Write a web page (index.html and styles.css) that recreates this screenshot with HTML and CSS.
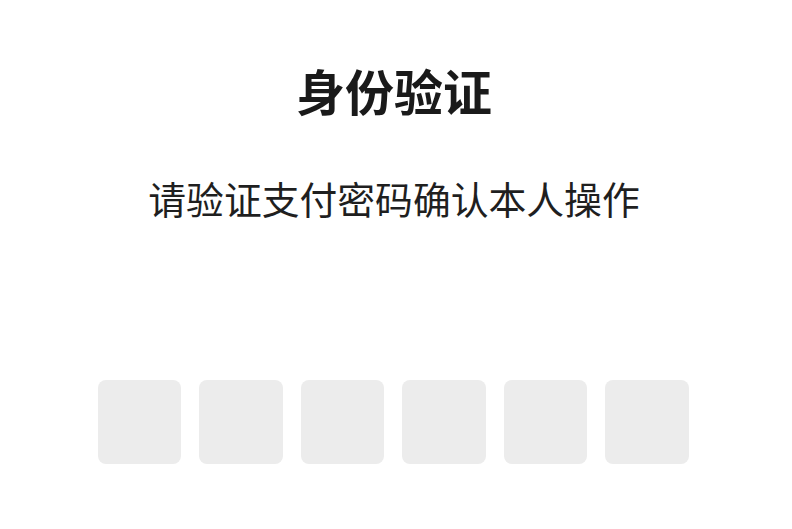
FILE: index.html
```html
<!DOCTYPE html>
<html lang="zh-CN">
<head>
<meta charset="utf-8">
<title>身份验证</title>
<link rel="stylesheet" href="styles.css">
</head>
<body>
<main class="page">
  <h1 class="title">身份验证</h1>
  <p class="subtitle">请验证支付密码确认本人操作</p>
  <div class="pin">
    <div class="cell"></div>
    <div class="cell"></div>
    <div class="cell"></div>
    <div class="cell"></div>
    <div class="cell"></div>
    <div class="cell"></div>
  </div>
</main>
</body>
</html>
```
FILE: styles.css
```css
html, body {
  margin: 0;
  padding: 0;
  background: #ffffff;
}
.page {
  width: 788px;
  height: 529px;
  display: flex;
  flex-direction: column;
  align-items: center;
  font-family: "Noto Sans CJK SC", "Noto Sans", sans-serif;
}
.title {
  margin: 65px 0 0 0;
  font-size: 49px;
  line-height: 49px;
  font-weight: 700;
  color: #1a1a1a;
}
.subtitle {
  margin: 65px 0 0 0;
  font-size: 37.8px;
  line-height: 38px;
  font-weight: 400;
  color: #1f1f1f;
}
.pin {
  margin-top: 163px;
  margin-right: 2px;
  display: flex;
  gap: 18px;
}
.cell {
  width: 83.5px;
  height: 83.5px;
  border-radius: 8px;
  background: #ececec;
}
```
